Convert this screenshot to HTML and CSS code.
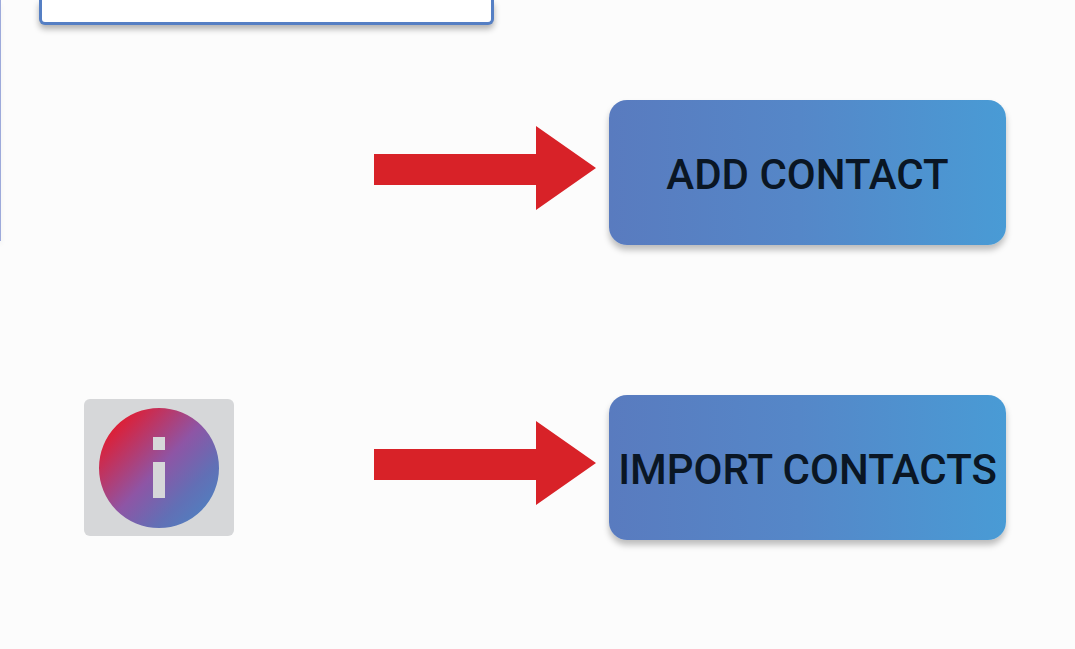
FILE: index.html
```
<!DOCTYPE html>
<html lang="en">
<head>
<meta charset="utf-8">
<meta name="viewport" content="width=device-width, initial-scale=1">
<title>Contacts</title>
<link rel="stylesheet" href="styles.css">
</head>
<body>
<div class="page">
  <div class="rail"></div>
  <main class="content">
    <div class="panel"></div>
    <div class="row">
      <svg class="arrow" viewBox="0 0 222 84" aria-hidden="true"><path d="M0 28H162V0L222 42L162 84V59H0Z"/></svg>
      <button class="action" type="button">ADD CONTACT</button>
    </div>
    <div class="row">
      <button class="info" type="button" aria-label="Information">
        <svg class="info-icon" viewBox="0 0 120 120" aria-hidden="true">
          <defs>
            <linearGradient id="info-fill" x1="0.12" y1="0.18" x2="0.84" y2="0.86">
              <stop offset="0" stop-color="#dc2038"/>
              <stop offset="0.5" stop-color="#8e55a5"/>
              <stop offset="0.82" stop-color="#626fb5"/>
              <stop offset="1" stop-color="#557bbd"/>
            </linearGradient>
          </defs>
          <path fill="url(#info-fill)" fill-rule="evenodd" d="M60 0A60 60 0 1 1 60 120A60 60 0 1 1 60 0ZM54 29V42H66V29ZM54 54V90H66V54Z"/>
        </svg>
      </button>
      <svg class="arrow" viewBox="0 0 222 84" aria-hidden="true"><path d="M0 28H162V0L222 42L162 84V59H0Z"/></svg>
      <button class="action" type="button">IMPORT CONTACTS</button>
    </div>
  </main>
</div>
</body>
</html>
```
FILE: styles.css
```
* {
  box-sizing: border-box;
}

body {
  margin: 0;
  background: #fcfcfc;
  font-family: Roboto, sans-serif;
}

.page {
  display: flex;
  align-items: flex-start;
}

.rail {
  width: 1px;
  height: 241px;
  background: #9daadb;
  box-shadow: 0 4px 4px rgba(0, 0, 0, 0.1);
}

.content {
  flex: 1;
  padding: 0 69px 48px 38px;
}

.panel {
  width: 455px;
  height: 25px;
  margin-bottom: 75px;
  border: 3px solid #557fc4;
  border-top: 0;
  border-radius: 0 0 6px 6px;
  background: #fff;
  box-shadow: 0 4px 6px rgba(0, 0, 0, 0.3);
}

.row {
  display: flex;
  align-items: center;
  justify-content: flex-end;
  gap: 13px;
  margin-bottom: 150px;
}

.row:last-child {
  margin-bottom: 0;
}

.arrow {
  flex: none;
  width: 222px;
  height: 84px;
  margin-bottom: 10px;
  fill: #d82228;
}

.action {
  flex: none;
  width: 397px;
  height: 145px;
  padding: 5px 0 0;
  border: 0;
  border-radius: 18px;
  background: linear-gradient(90deg, #597bbf, #5587c8 48%, #499bd5);
  box-shadow: 0 5px 6px rgba(0, 0, 0, 0.25);
  color: #0a1624;
  font-family: inherit;
  font-size: 42px;
  font-weight: 500;
  line-height: 48px;
  white-space: nowrap;
}

.info {
  display: flex;
  align-items: center;
  justify-content: center;
  width: 150px;
  height: 137px;
  margin-left: 45px;
  margin-right: auto;
  padding: 0;
  border: 0;
  border-radius: 6px;
  background: #d6d7d9;
}

.info-icon {
  width: 120px;
  height: 120px;
}
```
